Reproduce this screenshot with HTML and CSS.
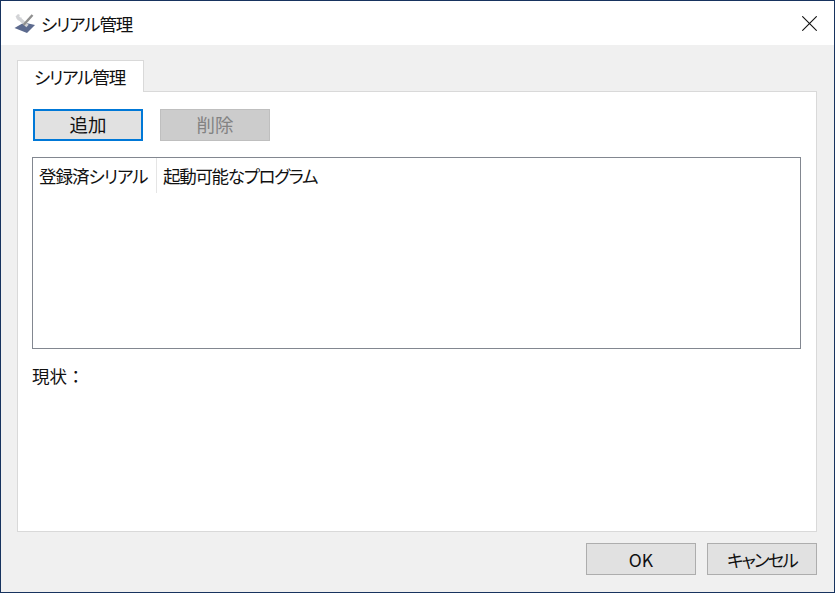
FILE: index.html
```html
<!DOCTYPE html>
<html lang="ja">
<head>
  <meta charset="UTF-8" />
  <title>シリアル管理</title>
  <link rel="stylesheet" href="styles.css">
</head>
<body>

  <div class="window">
    <div class="titlebar">
      <svg class="app-icon" width="22" height="20" viewBox="0 0 22 20">
        <path d="M0.5 15 L10 9.5 L21 12 L13 20 Z" fill="#5c6a8e" />
        <path d="M3.5 4 L13.5 13" stroke="#d2d3d6" stroke-width="3.4" fill="none" />
        <path d="M1.5 3.5 L4 1 L6 2 L4.5 4 L6 5.5 L7.5 4 L7 7 L4 7.5 Z" fill="#d2d3d6" />
        <path d="M18.5 2 L9.5 12" stroke="#8f8f8f" stroke-width="2.4" fill="none" />
      </svg>
      <span class="title">シリアル管理</span>
      <svg class="close" width="15" height="15" viewBox="0 0 15 15">
        <path d="M0.3 0.3 L14.7 14.7 M14.7 0.3 L0.3 14.7" stroke="#111" stroke-width="1.1" fill="none" />
      </svg>
    </div>

    <div class="content">
      <div class="tab">シリアル管理</div>

      <div class="panel">
        <div class="panel-buttons">
          <button class="btn btn-focus">追加</button>
          <button class="btn btn-disabled" disabled>削除</button>
        </div>

        <div class="list">
          <div class="list-head">
            <div class="col col-serial">登録済シリアル</div>
            <div class="col col-program">起動可能なプログラム</div>
          </div>
        </div>

        <div class="status">現状：</div>
      </div>

      <div class="footer">
        <button class="btn">OK</button>
        <button class="btn btn-cancel">キャンセル</button>
      </div>
    </div>
  </div>

</body>
</html>
```

FILE: styles.css
```css
html, body {
  margin: 0;
  padding: 0;
  height: 100%;
  overflow: hidden;
}

body {
  font-family: "Noto Sans CJK JP", "Noto Sans", sans-serif;
  font-size: 17.5px;
  font-feature-settings: "palt";
  color: #111;
  background: #f0f0f0;
}

.window {
  box-sizing: border-box;
  width: 835px;
  height: 593px;
  border: 1px solid #17335f;
  display: flex;
  flex-direction: column;
}

.titlebar {
  height: 44px;
  flex: none;
  background: white;
  display: flex;
  align-items: center;
  padding-left: 13px;
  padding-right: 17px;
}

.app-icon {
  margin-right: 5px;
}

.title {
  flex: 1;
  letter-spacing: -1.15px;
}

.content {
  flex: 1;
  padding: 15px 17px 0 16px;
  display: flex;
  flex-direction: column;
  background: #f0f0f0;
}

.tab {
  box-sizing: border-box;
  width: 127px;
  height: 32px;
  margin-bottom: -1px;
  padding-right: 2px;
  position: relative;
  z-index: 1;
  background: white;
  border: 1px solid #d9d9d9;
  border-bottom: none;
  text-align: center;
  line-height: 31px;
  letter-spacing: -1.15px;
}

.panel {
  box-sizing: border-box;
  height: 441px;
  background: white;
  border: 1px solid #d9d9d9;
  padding: 17px 15px 0 14px;
}

.panel-buttons {
  display: flex;
  gap: 17px;
  padding-left: 1px;
}

.btn {
  box-sizing: border-box;
  width: 110px;
  height: 32px;
  padding: 0;
  font-family: inherit;
  font-size: 17.5px;
  font-feature-settings: inherit;
  color: #111;
  background: #e1e1e1;
  border: 1px solid #adadad;
}

.panel-buttons .btn {
  padding-bottom: 3px;
  font-size: 18.5px;
}

.btn-focus {
  border: 2px solid #0078d7;
}

.btn-disabled {
  color: #838383;
  background: #cccccc;
  border-color: #bfbfbf;
}

.btn-cancel {
  letter-spacing: -1.9px;
}

.list {
  box-sizing: border-box;
  height: 192px;
  margin-top: 16px;
  border: 1px solid #828790;
}

.list-head {
  display: flex;
  height: 35px;
  line-height: 36px;
}

.col {
  padding-left: 6px;
}

.col-serial {
  width: 117px;
  border-right: 1px solid #e5e5e5;
  letter-spacing: -1px;
}

.col-program {
  letter-spacing: -1.3px;
}

.status {
  margin-top: 16px;
  line-height: 22px;
  font-feature-settings: normal;
}

.footer {
  display: flex;
  justify-content: flex-end;
  gap: 11px;
  margin-top: 11px;
}
```
